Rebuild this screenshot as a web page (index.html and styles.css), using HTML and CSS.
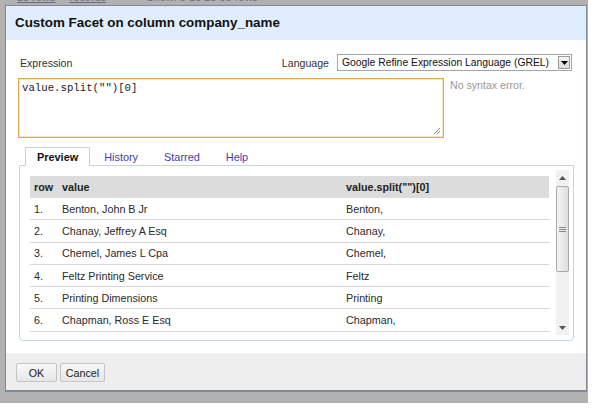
FILE: index.html
```html
<!DOCTYPE html>
<html>
<head>
<meta charset="utf-8">
<link rel="stylesheet" href="styles.css">
</head>
<body>
<div class="overlay">
  <div class="behind">
    <div class="behind-line"><span class="bl1">23 rows</span><span class="bl2">records</span><span class="bl3">Show: 5 10 25 50 rows</span></div>
  </div>
  <div class="dialog">
    <div class="header">Custom Facet on column company_name</div>
    <div class="body">
      <div class="expr-row">
        <span class="label">Expression</span>
        <div class="lang">
          <span class="label">Language</span>
          <div class="select">
            <span class="select-text">Google Refine Expression Language (GREL)</span>
            <span class="select-btn"><svg width="7" height="4" viewBox="0 0 7 4"><path d="M0 0h7L3.5 4z" fill="#000"/></svg></span>
          </div>
        </div>
      </div>
      <div class="input-row">
        <div class="textarea">value.split("")[0]<svg class="grip" width="8" height="8" viewBox="0 0 8 8"><path d="M7 1L1 7M7 4L4 7" stroke="#888" stroke-width="1"/></svg></div>
        <span class="status">No syntax error.</span>
      </div>
      <div class="tabs">
        <span class="tab active">Preview</span>
        <span class="tab">History</span>
        <span class="tab">Starred</span>
        <span class="tab">Help</span>
      </div>
      <div class="panel">
        <div class="scroll">
          <div class="content">
            <div class="trow thead"><span class="c1">row</span><span class="c2">value</span><span class="c3">value.split("")[0]</span></div>
            <div class="trow"><span class="c1">1.</span><span class="c2">Benton, John B Jr</span><span class="c3">Benton,</span></div>
            <div class="trow"><span class="c1">2.</span><span class="c2">Chanay, Jeffrey A Esq</span><span class="c3">Chanay,</span></div>
            <div class="trow"><span class="c1">3.</span><span class="c2">Chemel, James L Cpa</span><span class="c3">Chemel,</span></div>
            <div class="trow"><span class="c1">4.</span><span class="c2">Feltz Printing Service</span><span class="c3">Feltz</span></div>
            <div class="trow"><span class="c1">5.</span><span class="c2">Printing Dimensions</span><span class="c3">Printing</span></div>
            <div class="trow"><span class="c1">6.</span><span class="c2">Chapman, Ross E Esq</span><span class="c3">Chapman,</span></div>
          </div>
          <div class="sbar">
            <div class="sb-arrow"><svg width="7" height="4" viewBox="0 0 7 4"><path d="M0 4h7L3.5 0z" fill="#555"/></svg></div>
            <div class="sb-track">
              <div class="sb-thumb"><svg width="7" height="5" viewBox="0 0 7 5"><path d="M0 0.5h7M0 2.5h7M0 4.5h7" stroke="#8a8a8a" stroke-width="1"/></svg></div>
            </div>
            <div class="sb-arrow"><svg width="7" height="4" viewBox="0 0 7 4"><path d="M0 0h7L3.5 4z" fill="#555"/></svg></div>
          </div>
        </div>
      </div>
    </div>
    <div class="footer">
      <button class="btn ok">OK</button>
      <button class="btn cancel">Cancel</button>
    </div>
  </div>
</div>
</body>
</html>
```

FILE: styles.css
```css
* { box-sizing: border-box; }
html, body { margin: 0; padding: 0; background: #ffffff; }
body { font-family: "Liberation Sans", Arial, sans-serif; font-size: 10.75px; color: #222; }

.overlay {
  width: 588px;
  height: 403px;
  background: #b1b1b1;
  padding-left: 5px;
}
.behind { height: 5px; overflow: hidden; }
.behind-line {
  margin-top: -10px;
  height: 14px;
  line-height: 14px;
  font-size: 11px;
  color: #6a6f80;
  white-space: nowrap;
  padding-left: 12px;
}
.bl1, .bl2 { text-decoration: underline; margin-right: 14px; }
.bl3 { margin-left: 26px; }

.dialog {
  width: 582px;
  height: 387px;
  border: 1px solid #7f8893;
  border-bottom-width: 2px;
  background: #fff;
  display: flex;
  flex-direction: column;
}
.header {
  height: 34px;
  background: #dfedfd;
  padding-left: 9px;
  display: flex;
  align-items: center;
  font-weight: bold;
  font-size: 13.4px;
  color: #111;
  padding-bottom: 1px;
}
.body {
  height: 313px;
  padding: 14px 14px 0 12px;
}
.expr-row {
  height: 17px;
  display: flex;
  justify-content: space-between;
  align-items: center;
}
.label { color: #333; font-size: 10.6px; padding-left: 2px; }
.lang { display: flex; align-items: center; gap: 8px; }
.select {
  width: 235px;
  height: 17px;
  border: 1px solid #a6a6a6;
  display: flex;
  align-items: center;
  justify-content: space-between;
  padding: 0 1px 0 4px;
  background: #fff;
}
.select-text { font-size: 10.35px; color: #111; }
.select-btn {
  width: 12px;
  height: 13px;
  border: 1px solid #9a9a9a;
  background: linear-gradient(#f6f6f6, #dcdcdc);
  display: flex;
  align-items: center;
  justify-content: center;
}

.input-row {
  margin-top: 7px;
  display: flex;
  align-items: flex-start;
  gap: 6px;
}
.textarea {
  position: relative;
  width: 426px;
  height: 60px;
  border: 1px solid #dcaa55;
  box-shadow: inset 0 0 0 1px #f6e4c0;
  font-family: "Liberation Mono", "Courier New", monospace;
  font-size: 10.7px;
  color: #222;
  padding: 3px 3px;
  line-height: 13px;
}
.grip { position: absolute; right: 2px; bottom: 2px; }
.status { color: #999; font-size: 10.6px; padding-top: 1px; }

.tabs {
  margin-top: 9px;
  margin-left: 1px;
  padding-left: 6px;
  height: 18px;
  display: flex;
  position: relative;
  z-index: 1;
}
.tab {
  height: 18px;
  padding: 0 11px;
  border: 1px solid transparent;
  border-bottom: none;
  margin-right: 2px;
  color: #4438b8;
  font-size: 10.9px;
  line-height: 18px;
}
.tab.active {
  border-color: #c3d2f3;
  background: #fff;
  height: 19px;
  color: #111;
  font-weight: bold;
}
.panel {
  margin-left: 1px;
  width: 555px;
  height: 176px;
  border: 1px solid #c3d2f3;
  border-radius: 0 0 4px 4px;
  padding: 4px 4px 4px 6px;
}
.scroll {
  height: 165px;
  display: flex;
  overflow: hidden;
}
.content {
  flex: 1;
  padding: 6px 7px 0 4px;
  overflow: hidden;
}
.trow {
  display: flex;
  height: 22.3px;
  align-items: center;
  border-bottom: 1px solid #d6d6d6;
  color: #2a2a2a;
}
.thead {
  height: 22px;
  background: #dcdcdc;
  font-weight: bold;
  border-bottom: none;
  color: #222;
}
.c1 { width: 28px; padding-left: 4px; }
.c2 { width: 284px; padding-left: 4px; }
.c3 { flex: 1; padding-left: 4px; }

.sbar {
  width: 13px;
  display: flex;
  flex-direction: column;
  background: #f1f1f1;
}
.sb-arrow {
  height: 15px;
  display: flex;
  align-items: center;
  justify-content: center;
}
.sb-track { flex: 1; padding-top: 1px; }
.sb-thumb {
  height: 86px;
  border: 1px solid #a9a9a9;
  border-radius: 2px;
  background: linear-gradient(90deg, #f4f4f4, #dedede);
  display: flex;
  align-items: center;
  justify-content: center;
}

.footer {
  height: 37px;
  background: #eeeeee;
  padding: 10px 0 0 10px;
  display: flex;
  align-items: flex-start;
  gap: 3px;
}
.btn {
  height: 19px;
  border: 1px solid #c4c4c4;
  border-radius: 2px;
  background: linear-gradient(#f8f8f8, #e6e6e6);
  font-family: "Liberation Sans", Arial, sans-serif;
  font-size: 10.75px;
  color: #222;
  padding: 0;
}
.ok { width: 41px; }
.cancel { width: 45px; }
```
